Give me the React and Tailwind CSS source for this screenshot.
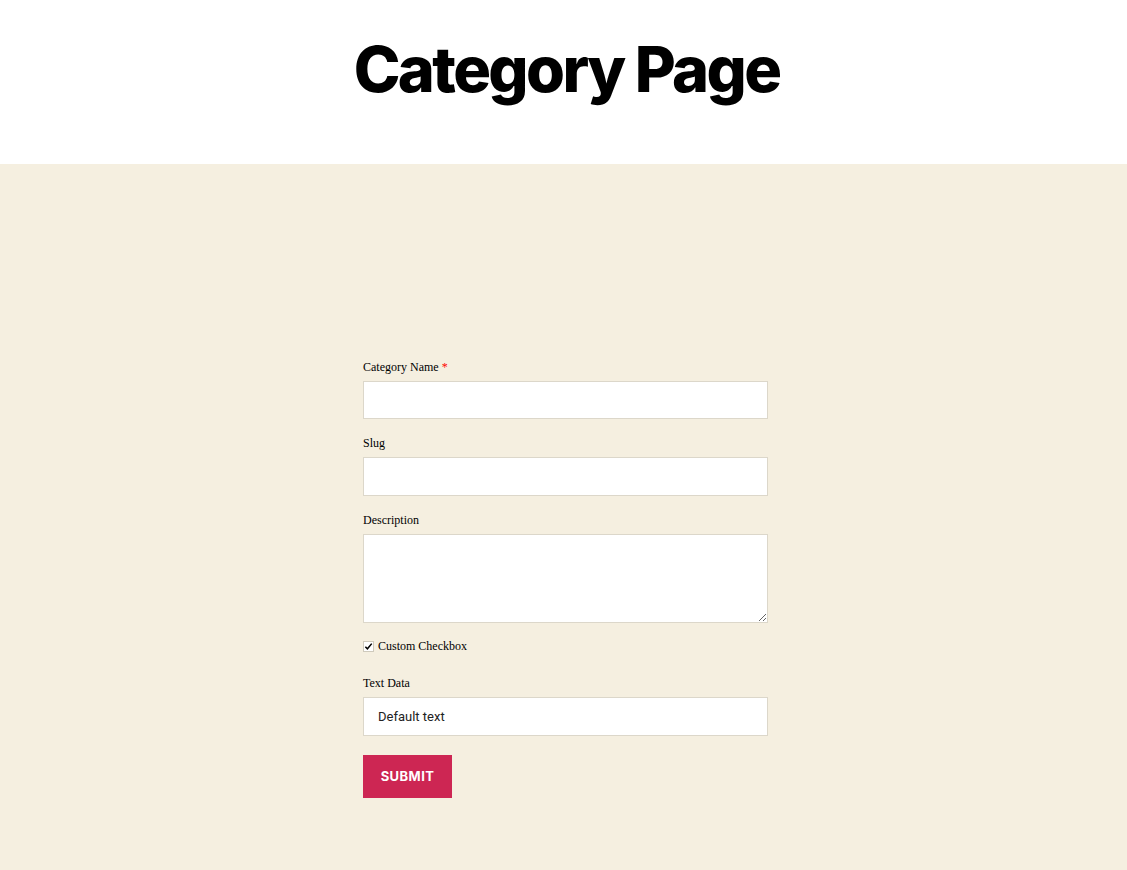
import React from 'react';

const labelCls = "block text-[12px] leading-[16px] text-black mb-[6px]";
const fieldCls = "block w-full bg-white border border-[#dcd7ca] outline-none";

export default function App() {
   return (
      <div className="min-h-[870px] flex flex-col bg-[#f5efe0]" style={{ fontFamily: '"Liberation Serif", serif' }}>
         {/* Title band */}
         <header className="bg-white h-[164px] flex justify-center pt-[37px] pl-[6px]">
            <h1 className="font-['Inter',sans-serif] font-extrabold text-[63px] leading-[64px] tracking-[-0.0415em] text-black">
               Category Page
            </h1>
         </header>

         {/* Form */}
         <main className="flex justify-center pt-[195px] pb-[72px] pl-[4px]">
            <form className="w-[405px]" onSubmit={(e) => e.preventDefault()}>
               <label className={labelCls}>
                  Category Name <span className="text-[#ff0000]">*</span>
               </label>
               <input type="text" className={`${fieldCls} h-[38px] mb-[16px]`} />

               <label className={labelCls}>Slug</label>
               <input type="text" className={`${fieldCls} h-[39px] mb-[16px]`} />

               <label className={labelCls}>Description</label>
               <textarea className={`${fieldCls} h-[89px] mb-[15px]`} />

               <label className="flex items-center gap-[4px] text-[12px] leading-[16px] text-black mb-[21px]">
                  <span className="w-[11px] h-[11px] bg-white border border-[#cfcabc] flex items-center justify-center">
                     <svg viewBox="0 0 10 10" className="w-[9px] h-[9px]">
                        <path d="M1.5 5.2 L3.8 7.6 L8.6 1.8" fill="none" stroke="#000" strokeWidth="1.7" />
                     </svg>
                  </span>
                  Custom Checkbox
               </label>

               <label className={labelCls}>Text Data</label>
               <input
                  type="text"
                  defaultValue="Default text"
                  className={`${fieldCls} h-[39px] mb-[19px] px-[14px] font-['Roboto',sans-serif] text-[13px] text-[#222]`}
               />

               <button
                  type="submit"
                  className="h-[43px] w-[89px] bg-[#cd2653] text-white font-['Inter',sans-serif] font-bold text-[13px] tracking-[0.0333em]"
               >
                  SUBMIT
               </button>
            </form>
         </main>
      </div>
   );
}
